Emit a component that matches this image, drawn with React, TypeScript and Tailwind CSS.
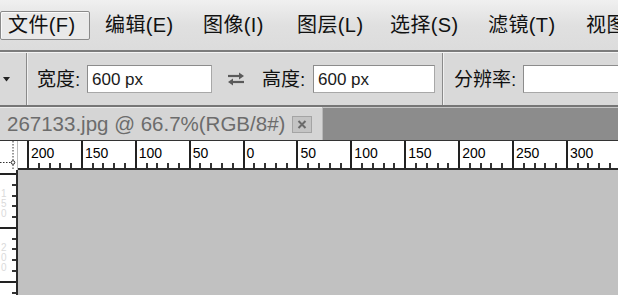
import React from "react";

const F = "font-['Liberation_Sans','Noto_Sans_CJK_SC',sans-serif]";

const menu = [
  { t: "编辑(E)", w: 98 },
  { t: "图像(I)", w: 94 },
  { t: "图层(L)", w: 93 },
  { t: "选择(S)", w: 98 },
  { t: "滤镜(T)", w: 98 },
  { t: "视图(V)", w: 120 },
];

const labels = ["200", "150", "100", "50", "0", "50", "100", "150", "200", "250", "300", ""];

function HSeg({ label }: { label: string }) {
  return (
    <div className="w-[53.9px] shrink-0 h-full border-l-2 border-[#222] flex flex-col justify-between">
      <span className="pl-[2px] pt-[5px] text-[14px] leading-none text-black">{label}</span>
      <div className="flex h-[5px]">
        <div className="flex-1 border-r-2 border-[#333]" />
        <div className="flex-1 border-r-2 border-[#333]" />
        <div className="flex-1 border-r-2 border-[#333]" />
        <div className="flex-1 border-r-2 border-[#333]" />
        <div className="flex-1" />
      </div>
    </div>
  );
}

function VSeg({ label }: { label: string }) {
  return (
    <div className="h-[53.9px] shrink-0 w-full border-t-2 border-[#222] flex flex-row justify-between">
      <div className="flex flex-col text-[10px] leading-[10px] text-[#dadada] pl-[1px] pt-[14px]">
        {label.split("").map((c, i) => (
          <span key={i}>{c}</span>
        ))}
      </div>
      <div className="flex flex-col w-[4px]">
        <div className="flex-1 border-b-2 border-[#333]" />
        <div className="flex-1 border-b-2 border-[#333]" />
        <div className="flex-1 border-b-2 border-[#333]" />
        <div className="flex-1 border-b-2 border-[#333]" />
        <div className="flex-1" />
      </div>
    </div>
  );
}

function Input({ w, value }: { w: string; value?: string }) {
  return (
    <div
      className={`${w} shrink-0 h-[28px] bg-white border border-[#a8a8a8] border-t-[#8c8c8c] border-l-[#8c8c8c] flex items-center pl-[4px] text-[17px] leading-none text-[#1a1a1a]`}
    >
      {value}
    </div>
  );
}

function Sep() {
  return (
    <div className="self-stretch flex shrink-0">
      <div className="w-[1px] bg-[#8a8a8a]" />
      <div className="w-[1px] bg-[#f0f0f0]" />
    </div>
  );
}

export default function App() {
  return (
    <div className={`w-[618px] h-[295px] overflow-hidden flex flex-col bg-[#c1c1c1] ${F}`}>
      {/* Menu bar */}
      <div className="h-[50px] shrink-0 bg-gradient-to-b from-[#f0f0f0] via-[#e0e0e0] to-[#dcdcdc] flex items-center text-[20px] leading-none text-[#111] overflow-hidden">
        <div className="w-[97px] shrink-0 flex items-center">
          <div className="w-[90px] h-[29px] border border-[#8a8a8a] rounded-[2px] bg-[#e9e9e9] shadow-[inset_1px_1px_0_#fafafa] flex items-center pl-[7px] tracking-[0.4px]">
            文件(F)
          </div>
        </div>
        {menu.map((m) => (
          <div key={m.t} style={{ width: m.w }} className="shrink-0 pl-[8px] whitespace-nowrap tracking-[0.4px]">
            {m.t}
          </div>
        ))}
      </div>
      <div className="h-[2px] shrink-0 bg-[#7c7c7c]" />
      {/* Options bar */}
      <div className="h-[53px] shrink-0 bg-[#d9d9d9] flex items-center text-[19px] leading-none text-[#111] border-t border-[#f4f4f4] overflow-hidden">
        <div className="w-[26px] shrink-0 flex justify-center pr-[14px]">
          <svg width="7" height="5" viewBox="0 0 7 5">
            <path d="M0 0 L7 0 L3.5 4.5 Z" fill="#222" />
          </svg>
        </div>
        <Sep />
        <span className="ml-[9px] w-[50px] shrink-0">宽度:</span>
        <Input w="w-[125px]" value="600 px" />
        <div className="w-[50px] shrink-0 flex justify-center pr-[2px]">
          <svg width="20" height="14" viewBox="0 0 20 14">
            <path d="M2 4 H14" stroke="#5a5a5a" strokeWidth="2.2" />
            <path d="M13 0.5 L18 4 L13 7.5 Z" fill="#5a5a5a" />
            <path d="M6 10 H18" stroke="#5a5a5a" strokeWidth="2.2" />
            <path d="M7 6.5 L2 10 L7 13.5 Z" fill="#5a5a5a" />
          </svg>
        </div>
        <span className="w-[51px] shrink-0">高度:</span>
        <Input w="w-[122px]" value="600 px" />
        <div className="w-[7px] shrink-0" />
        <Sep />
        <span className="ml-[10px] w-[69px] shrink-0">分辨率:</span>
        <Input w="w-[110px]" />
      </div>
      <div className="h-[2px] shrink-0 bg-[#767676]" />
      {/* Tab bar */}
      <div className="h-[33px] shrink-0 flex">
        <div className="w-[322px] shrink-0 bg-[#d5d5d5] flex items-center pl-[7px] border-t border-[#ececec]">
          <span className="text-[20.5px] leading-none text-[#6c6c6c] whitespace-nowrap">267133.jpg @ 66.7%(RGB/8#)</span>
          <div className="ml-auto mr-[10px] w-[20px] h-[17px] bg-[#c4c4c4] border border-[#a4a4a4] flex items-center justify-center">
            <svg width="10" height="9" viewBox="0 0 10 9">
              <path d="M1.5 1 L8.5 8 M8.5 1 L1.5 8" stroke="#6a6a6a" strokeWidth="2" />
            </svg>
          </div>
        </div>
        <div className="flex-1 bg-[#8c8c8c] border-l border-[#b8b8b8] border-t border-t-[#c6c6c6]" />
      </div>
      {/* Rulers + canvas */}
      <div className="flex-1 grid grid-cols-[18px_1fr] grid-rows-[29px_1fr] min-h-0 border-t border-[#333]">
        <div className="bg-white border-r border-[#bdbdbd] overflow-hidden">
          <svg width="18" height="28" viewBox="0 0 18 28">
            <path d="M13 0 V20" stroke="#333" strokeWidth="1" strokeDasharray="1.5 1.5" />
            <path d="M0 21.5 H12" stroke="#333" strokeWidth="1" strokeDasharray="1.5 1.5" />
            <circle cx="13" cy="21.5" r="1.8" fill="none" stroke="#333" strokeWidth="1" />
            <path d="M13 23.5 V28" stroke="#333" strokeWidth="1" strokeDasharray="1.5 1.5" />
          </svg>
        </div>
        <div className="bg-white flex overflow-hidden border-b-2 border-[#2a2a2a]">
          <div className="w-[9px] shrink-0" />
          {labels.map((l, i) => (
            <HSeg key={i} label={l} />
          ))}
        </div>
        <div className="bg-white border-r-2 border-[#2a2a2a] flex flex-col overflow-hidden">
          <div className="h-[3px] shrink-0" />
          <VSeg label="150" />
          <VSeg label="200" />
          <VSeg label="250" />
        </div>
        <div className="bg-[#c1c1c1]" />
      </div>
    </div>
  );
}
